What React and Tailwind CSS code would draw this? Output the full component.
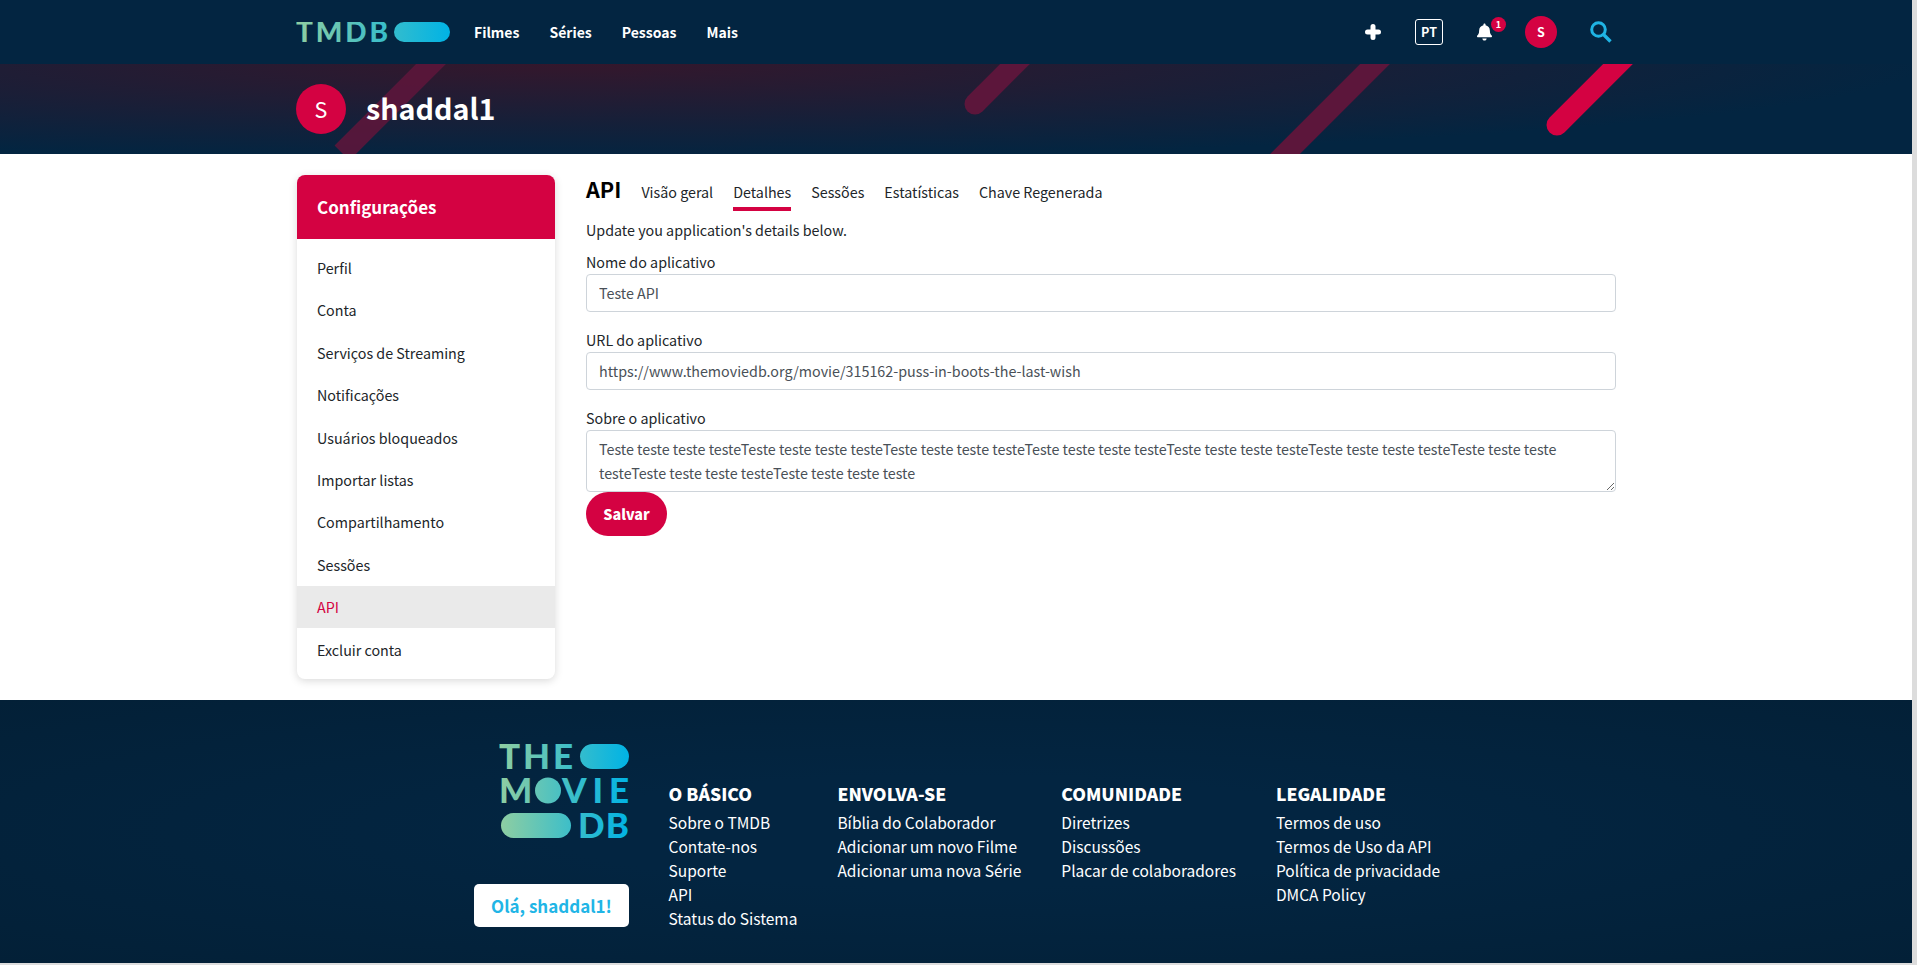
import React from 'react';
import { FaBell } from 'react-icons/fa';

const sideItems = ['Perfil', 'Conta', 'Serviços de Streaming', 'Notificações', 'Usuários bloqueados', 'Importar listas', 'Compartilhamento', 'Sessões', 'API', 'Excluir conta'];

const tabs = ['Visão geral', 'Detalhes', 'Sessões', 'Estatísticas', 'Chave Regenerada'];

const footerCols = [
    { title: 'O Básico', links: ['Sobre o TMDB', 'Contate-nos', 'Suporte', 'API', 'Status do Sistema'] },
    { title: 'Envolva-se', links: ['Bíblia do Colaborador', 'Adicionar um novo Filme', 'Adicionar uma nova Série'] },
    { title: 'Comunidade', links: ['Diretrizes', 'Discussões', 'Placar de colaboradores'] },
    { title: 'Legalidade', links: ['Termos de uso', 'Termos de Uso da API', 'Política de privacidade', 'DMCA Policy'] },
];

const aboutText = 'Teste teste teste testeTeste teste teste testeTeste teste teste testeTeste teste teste testeTeste teste teste testeTeste teste teste testeTeste teste teste testeTeste teste teste testeTeste teste teste teste';

const NavLogo = () => (
    <svg width="154" height="20" viewBox="0 0 154 20" className="block">
        <defs>
            <linearGradient id="navGrad" x1="0" y1="0" x2="154" y2="0" gradientUnits="userSpaceOnUse">
                <stop offset="0" stopColor="#90cea1" />
                <stop offset="0.56" stopColor="#3cbec9" />
                <stop offset="1" stopColor="#00b3e5" />
            </linearGradient>
        </defs>
        <text x="0" y="20" fontFamily="Lato, sans-serif" fontWeight="900" fontSize="28" textLength="92" fill="url(#navGrad)">TMDB</text>
        <rect x="98" y="0" width="56" height="20" rx="10" fill="url(#navGrad)" />
    </svg>
);

const FooterLogo = () => (
    <svg width="130" height="94" viewBox="0 0 130 94" className="block">
        <defs>
            <linearGradient id="footGrad" x1="0" y1="0" x2="130" y2="0" gradientUnits="userSpaceOnUse">
                <stop offset="0" stopColor="#90cea1" />
                <stop offset="0.56" stopColor="#3cbec9" />
                <stop offset="1" stopColor="#00b3e5" />
            </linearGradient>
        </defs>
        <g fontFamily="Lato, sans-serif" fontWeight="900" fontSize="35" fill="url(#footGrad)">
            <text x="0" y="25" textLength="74">THE</text>
            <rect x="81" y="0" width="49" height="25" rx="12.5" />
            <text x="0" y="59" textLength="30">M</text>
            <circle cx="49" cy="46.5" r="13" />
            <text x="63" y="59" textLength="67">VIE</text>
            <rect x="2" y="69" width="70" height="25" rx="12.5" />
            <text x="79" y="94" textLength="51">DB</text>
        </g>
    </svg>
);

const Field = ({ label, value, labelClass }) => (
    <div>
        <label className={`block leading-[24px] text-[#212529] ${labelClass}`}>{label}</label>
        <input readOnly value={value} className="block h-[38px] w-full rounded-[4px] border border-[#ced4da] bg-white px-3 pb-[2px] text-[14.3px] text-[#495057] outline-none" />
    </div>
);

const App = () => {
    return (
        <div className="flex h-screen overflow-hidden bg-[#dcdcdc] font-['Noto_Sans_CJK_SC',sans-serif] text-[14.3px]">
            <div className="h-[963px] w-[1912px] shrink-0 bg-white">
                {/* Top nav */}
                <nav className="h-16 bg-[#032541]">
                    <div className="mx-auto flex h-full w-[1320px] items-center">
                        <NavLogo />
                        <div className="ml-6 flex gap-[30px] text-[14px] font-semibold text-white">
                            <span>Filmes</span>
                            <span>Séries</span>
                            <span>Pessoas</span>
                            <span>Mais</span>
                        </div>
                        <div className="ml-auto flex items-center pr-1">
                            <svg width="16" height="16" viewBox="0 0 16 16" stroke="#ffffff" strokeWidth="5" strokeLinecap="round">
                                <path d="M8 2.5 V13.5 M2.5 8 H13.5" />
                            </svg>
                            <div className="ml-[34px] flex h-[26px] w-[28px] items-center justify-center rounded-[3px] border border-white text-[12.5px] font-semibold text-white">PT</div>
                            <div className="relative ml-[34px] mr-[33px]">
                                <FaBell className="h-[18px] w-[15px] text-white" />
                                <span className="absolute -right-[14px] -top-[6px] flex h-[15px] w-[15px] items-center justify-center rounded-full bg-[#d40242] text-[9px] font-bold text-white">1</span>
                            </div>
                            <div className="flex h-8 w-8 items-center justify-center rounded-full bg-[#d40242] text-[12.5px] font-semibold text-white">S</div>
                            <svg width="22" height="22" viewBox="0 0 22 22" className="ml-[33px]" fill="none" stroke="#1fb4e4" strokeWidth="3">
                                <circle cx="8.5" cy="8.5" r="6.8" />
                                <path d="M13.5 13.5 L20.5 20.5" strokeWidth="3.4" />
                            </svg>
                        </div>
                    </div>
                </nav>

                {/* Profile banner */}
                <header className="relative h-[90px] overflow-hidden bg-[radial-gradient(ellipse_1350px_95px_at_30%_0%,#34172c_0%,#032541_100%)]">
                    <svg className="absolute inset-0 h-full w-full" fill="none" strokeWidth="21">
                        <path d="M442 -11 L342 89" stroke="#5c163b" strokeOpacity="0.9" />
                        <path d="M1026 -11 L975 40" stroke="#5c163b" strokeLinecap="round" />
                        <path d="M1386 -11 L1276 99" stroke="#5c163b" />
                        <path d="M1629 -11 L1557 61" stroke="#d40242" strokeLinecap="round" />
                    </svg>
                    <div className="relative mx-auto flex h-full w-[1320px] items-center">
                        <div className="flex h-[50px] w-[50px] items-center justify-center rounded-full bg-[#d40242] text-[21.5px] text-white">S</div>
                        <h1 className="mb-[2px] ml-5 text-[28.7px] font-bold text-white">shaddal1</h1>
                    </div>
                </header>

                {/* Settings */}
                <main className="mx-auto flex h-[546px] w-[1320px] pt-[21px]">
                    <aside className="ml-px h-[504px] w-[258px] shrink-0 overflow-hidden rounded-lg bg-white shadow-[0_2px_8px_rgba(0,0,0,0.15)]">
                        <div className="flex h-16 items-center bg-[#d40242] px-5 text-[17px] font-semibold text-white">Configurações</div>
                        <ul className="py-[7.6px]">
                            {sideItems.map((item) => (
                                <li key={item} className={`flex h-[42.4px] items-center px-5 ${item === 'API' ? 'bg-[#eaeaea] text-[#d40242]' : 'text-[#212529]'}`}>{item}</li>
                            ))}
                        </ul>
                    </aside>

                    <section className="ml-[31px] flex-1">
                        <div className="flex h-[36px] items-start">
                            <span className="text-[21.6px] font-semibold leading-[28px] text-black">API</span>
                            <div className="ml-5 flex gap-5 pt-[5px] text-[#212529]">
                                {tabs.map((tab) => (
                                    <span key={tab} className={`h-[31px] leading-[24px] ${tab === 'Detalhes' ? 'border-b-4 border-[#d40242]' : ''}`}>{tab}</span>
                                ))}
                            </div>
                        </div>
                        <p className="mt-[7px] leading-[24px] text-[#212529]">Update you application's details below.</p>
                        <Field label="Nome do aplicativo" value="Teste API" labelClass="mt-[8px]" />
                        <Field label="URL do aplicativo" value="https://www.themoviedb.org/movie/315162-puss-in-boots-the-last-wish" labelClass="mt-[16px]" />
                        <label className="mt-[16px] block leading-[24px] text-[#212529]">Sobre o aplicativo</label>
                        <textarea readOnly defaultValue={aboutText} className="block h-[62px] w-full rounded-[4px] border border-[#ced4da] px-3 py-[6px] leading-[24px] text-[#495057] outline-none" />
                        <button className="block h-11 w-[81px] rounded-[22px] bg-[#d40242] text-[14.4px] font-black text-white">Salvar</button>
                    </section>
                </main>

                {/* Footer */}
                <footer className="h-[263px] bg-[radial-gradient(ellipse_at_center,#032541_0%,#032541_30%,#032037_100%)]">
                    <div className="flex pl-[474px]">
                        <div className="mr-[39.5px] flex w-[155px] shrink-0 flex-col items-end pt-[44px]">
                            <FooterLogo />
                            <div className="mt-[46px] flex h-[43px] w-[155px] items-center justify-center rounded-[5px] bg-white text-[17px] font-bold text-[#21b5e6]">Olá, shaddal1!</div>
                        </div>
                        <div className="flex pt-[80px]">
                            {footerCols.map((col) => (
                                <div key={col.title} className="mr-10">
                                    <h3 className="text-[17.5px] font-black uppercase leading-[28px] text-white">{col.title}</h3>
                                    <ul className="mt-[2px]">
                                        {col.links.map((link) => (
                                            <li key={link} className="h-6 whitespace-nowrap text-[15.5px] leading-[24px] text-white">{link}</li>
                                        ))}
                                    </ul>
                                </div>
                            ))}
                        </div>
                    </div>
                </footer>
            </div>
        </div>
    );
};

export default App;
